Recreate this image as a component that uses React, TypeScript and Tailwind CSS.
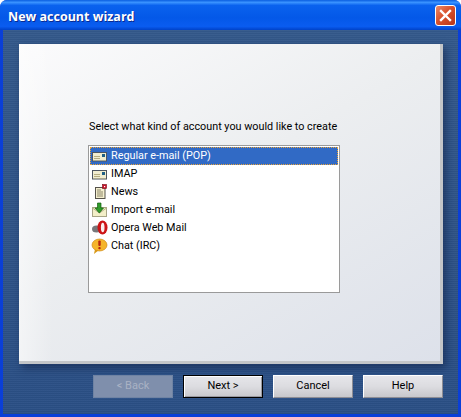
import type { ReactNode } from 'react'

const MailIcon = () => (
  <svg width="18" height="18" viewBox="0 0 18 18" className="shrink-0">
    <rect x="2.5" y="5.5" width="14" height="8.5" fill="#f1edd0" stroke="#4d5560" />
    <path d="M3 13.5h13" stroke="#a9a68f" />
    <rect x="12" y="7" width="3" height="3" fill="#1f5f85" />
    <path d="M4 9.5h6M4 11.5h6" stroke="#b5ad80" />
  </svg>
)

const NewsIcon = () => (
  <svg width="18" height="18" viewBox="0 0 18 18" className="shrink-0">
    <rect x="5.5" y="4.5" width="9.5" height="11" fill="#f4efcf" stroke="#55524a" />
    <path d="M7 7h4M7 9h6M7 11h6M7 13h6" stroke="#8d876a" />
    <rect x="12.5" y="1.5" width="4" height="4" fill="#c9122a" stroke="#7a0d18" strokeWidth="0.6" />
    <rect x="14" y="3" width="1.2" height="1.2" fill="#fff" />
  </svg>
)

const ImportIcon = () => (
  <svg width="18" height="18" viewBox="0 0 18 18" className="shrink-0">
    <rect x="2.5" y="6.5" width="14" height="9" fill="#f3efc8" stroke="#a8a585" />
    <path d="M2.5 7l7 5 7-5" fill="none" stroke="#b7b28a" />
    <path d="M7.5 2h3.5v5h2.5l-4.2 5-4.3-5h2.5z" fill="#2f9a2a" stroke="#14610f" strokeWidth="0.7" />
  </svg>
)

const OperaIcon = () => (
  <svg width="18" height="18" viewBox="0 0 18 18" className="shrink-0">
    <ellipse cx="6.5" cy="10" rx="4.5" ry="3.5" fill="#77777a" />
    <ellipse cx="12.5" cy="8.5" rx="5" ry="7" fill="#cc1416" />
    <ellipse cx="12.7" cy="8.5" rx="1.8" ry="4.8" fill="#fbeeee" />
  </svg>
)

const ChatIcon = () => (
  <svg width="18" height="18" viewBox="0 0 18 18" className="shrink-0">
    <path d="M5 12l-1 5 5-4z" fill="#d99a18" />
    <ellipse cx="9.5" cy="8" rx="7.5" ry="6" fill="#f5b52a" stroke="#d08a14" strokeWidth="0.7" />
    <rect x="8.3" y="3.5" width="2.4" height="5.5" rx="1" fill="#b8250f" />
    <rect x="8.3" y="10" width="2.4" height="2.2" rx="1" fill="#b8250f" />
  </svg>
)

const accounts: { label: string; icon: ReactNode }[] = [
  { label: 'Regular e-mail (POP)', icon: <MailIcon /> },
  { label: 'IMAP', icon: <MailIcon /> },
  { label: 'News', icon: <NewsIcon /> },
  { label: 'Import e-mail', icon: <ImportIcon /> },
  { label: 'Opera Web Mail', icon: <OperaIcon /> },
  { label: 'Chat (IRC)', icon: <ChatIcon /> },
]

const WizardButton = ({ label, focused, disabled }: { label: string; focused?: boolean; disabled?: boolean }) => {
  if (disabled) {
    return (
      <button className="w-20 h-[23px] border border-[#6f83a3] bg-[#7f8fac] text-[#a9b2c4] text-[11px]">
        {label}
      </button>
    )
  }
  return (
    <button
      className={
        'w-20 h-[23px] text-black text-[11px] bg-[linear-gradient(180deg,#e6e6ea_0%,#dcdce0_50%,#c8c8cc_100%)] ' +
        (focused
          ? 'border border-black shadow-[inset_1px_1px_0_#fff,inset_-1px_-1px_0_#9a9aa0]'
          : 'border border-t-white border-l-white border-r-[#8d8d94] border-b-[#8d8d94]')
      }
    >
      {label}
    </button>
  )
}

export default function App() {
  return (
    <div className="w-[461px] h-[417px] flex flex-col bg-[#0a3fd8] rounded-t-[7px] overflow-hidden font-['Roboto','Liberation_Sans',sans-serif]">
      <div className="h-[30px] shrink-0 flex items-center justify-between pl-2 pr-[5px] bg-[linear-gradient(180deg,#0a5ee0_0%,#3a93ff_8%,#0a62ee_18%,#0458e8_60%,#0a5cf0_88%,#0042c8_100%)]">
        <span className="pt-[5px] text-white font-bold text-[12.5px] font-['Open_Sans',sans-serif] [text-shadow:1px_1px_0_#0a2a90]">
          New account wizard
        </span>
        <div className="w-[21px] h-[21px] rounded-[3px] border border-white flex items-center justify-center bg-[linear-gradient(135deg,#ea8a6a_0%,#d9512c_45%,#b8351a_100%)]">
          <svg width="13" height="13" viewBox="0 0 13 13">
            <path d="M2 2l9 9M11 2l-9 9" stroke="#fff" strokeWidth="2.4" strokeLinecap="square" />
          </svg>
        </div>
      </div>

      <div className="flex-1 mx-[3px] mb-[3px] flex flex-col pt-[14px] pl-4 pr-[15px] bg-[repeating-linear-gradient(180deg,rgba(255,255,255,0.03)_0px,rgba(255,255,255,0.03)_1px,rgba(0,0,0,0.03)_1px,rgba(0,0,0,0.03)_2px),linear-gradient(180deg,#34598b_0%,#2a4f85_100%)]">
        <div className="h-[320px] shrink-0 border-r-[3px] border-b-[3px] border-[#c3c5c8] flex flex-col bg-[linear-gradient(90deg,rgba(255,255,255,0.45)_0%,rgba(255,255,255,0)_8%),linear-gradient(150deg,#fbfbfc_0%,#eceef0_45%,#dde1ea_100%)] shadow-[3px_4px_8px_rgba(15,30,65,0.55)]">
          <div className="pl-[70px] pt-[76px] text-[10.8px] text-black leading-[14px]">
            Select what kind of account you would like to create
          </div>
          <div className="ml-[69px] mt-[11px] w-[252px] h-[148px] border border-[#9a9a9a] bg-white p-px">
            {accounts.map((a, i) => (
              <div
                key={a.label}
                className={
                  'h-[18px] flex items-center gap-[3px] text-[10.8px] ' +
                  (i === 0 ? 'bg-[#316ac5] text-white outline-1 outline-dotted outline-[#e8a33a] -outline-offset-1' : 'text-black')
                }
              >
                {a.icon}
                <span>{a.label}</span>
              </div>
            ))}
          </div>
        </div>
        <div className="flex justify-end gap-[10px] mt-[11px]">
          <WizardButton label="< Back" disabled />
          <WizardButton label="Next >" focused />
          <WizardButton label="Cancel" />
          <WizardButton label="Help" />
        </div>
      </div>
    </div>
  )
}
